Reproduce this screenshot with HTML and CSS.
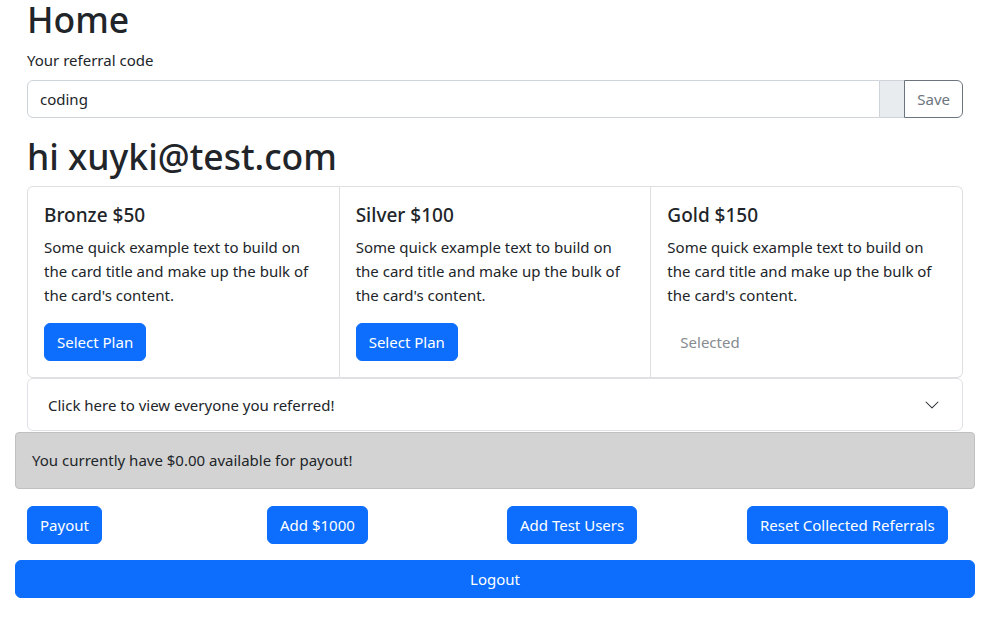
FILE: index.html
```html
<!DOCTYPE html>
<html lang="en">
<head>
<meta charset="utf-8">
<title>Home</title>
<link rel="stylesheet" href="styles.css">
</head>
<body>
<div class="page">
  <div class="inner">
    <h1 class="title first">Home</h1>
    <label class="label" for="code">Your referral code</label>
    <div class="input-group">
      <input id="code" class="input" type="text" value="coding">
      <span class="addon"></span>
      <button class="btn-outline">Save</button>
    </div>
    <h1 class="title">hi xuyki@test.com</h1>
    <div class="card-group">
      <div class="card">
        <h5 class="card-title">Bronze $50</h5>
        <p class="card-text">Some quick example text to build on the card title and make up the bulk of the card's content.</p>
        <button class="btn">Select Plan</button>
      </div>
      <div class="card">
        <h5 class="card-title">Silver $100</h5>
        <p class="card-text">Some quick example text to build on the card title and make up the bulk of the card's content.</p>
        <button class="btn">Select Plan</button>
      </div>
      <div class="card">
        <h5 class="card-title">Gold $150</h5>
        <p class="card-text">Some quick example text to build on the card title and make up the bulk of the card's content.</p>
        <button class="btn-selected" disabled>Selected</button>
      </div>
    </div>
    <div class="accordion">
      <span>Click here to view everyone you referred!</span>
      <svg class="chev" width="16" height="16" viewBox="0 0 16 16"><path fill="#212529" fill-rule="evenodd" d="M1.646 4.646a.5.5 0 0 1 .708 0L8 10.293l5.646-5.647a.5.5 0 0 1 .708.708l-6 6a.5.5 0 0 1-.708 0l-6-6a.5.5 0 0 1 0-.708z"/></svg>
    </div>
  </div>
  <div class="alert">You currently have $0.00 available for payout!</div>
  <div class="row">
    <div class="col"><button class="btn">Payout</button></div>
    <div class="col"><button class="btn">Add $1000</button></div>
    <div class="col"><button class="btn">Add Test Users</button></div>
    <div class="col"><button class="btn">Reset Collected Referrals</button></div>
  </div>
  <button class="btn btn-block">Logout</button>
</div>
</body>
</html>
```
FILE: styles.css
```css
* { box-sizing: border-box; }
html, body { margin: 0; padding: 0; background: #fff; }
body {
  font-family: "Noto Sans", "Open Sans", sans-serif;
  font-size: 15px;
  line-height: 24px;
  color: #212529;
}
.page { padding: 0 15px; }
.inner { padding: 0 12px; }
.title {
  font-size: 35.5px;
  font-weight: 500;
  line-height: 44px;
  margin: 0 0 8px;
}
.title.first { line-height: 38px; margin: 0 0 10px; }
.label { display: block; margin-bottom: 8px; }
.input-group { display: flex; height: 38px; margin-bottom: 16px; }
.input {
  flex: 1;
  min-width: 0;
  font: inherit;
  color: #212529;
  padding: 6px 12px;
  border: 1px solid #ced4da;
  border-radius: 6px 0 0 6px;
  background: #fff;
  outline: none;
}
.addon {
  width: 25px;
  background: #e9ecef;
  border: 1px solid #ced4da;
  border-left: 0;
}
.btn-outline {
  font: inherit;
  color: #6c757d;
  background: #fff;
  border: 1px solid #6c757d;
  border-radius: 0 6px 6px 0;
  padding: 6px 12px;
  margin-left: -1px;
}
.card-group { display: flex; }
.card {
  flex: 1;
  padding: 16px;
  border: 1px solid #dfdfdf;
  border-left: 0;
}
.card:first-child { border-left: 1px solid #dfdfdf; border-radius: 6px 0 0 6px; }
.card:last-child { border-radius: 0 6px 6px 0; }
.card-title { font-size: 19px; font-weight: 500; line-height: 24px; margin: 0 0 8px; }
.card-text { margin: 0 0 16px; }
.btn {
  font: inherit;
  color: #fff;
  background: #0d6efd;
  border: 1px solid #0d6efd;
  border-radius: 6px;
  padding: 6px 12px;
  line-height: 24px;
}
.btn-selected {
  font: inherit;
  color: #868b90;
  background: transparent;
  border: 1px solid transparent;
  padding: 6px 12px;
  line-height: 24px;
}
.accordion {
  display: flex;
  align-items: center;
  justify-content: space-between;
  padding: 14px 20px 13px;
  border: 1px solid #dee2e6;
  border-radius: 6px;
}
.chev { flex: none; margin-right: 2px; }
.alert {
  background: #d3d3d3;
  border: 1px solid #c0c0c0;
  border-radius: 4px;
  padding: 15px 16px 16px;
  margin: 1px 0 17px;
}
.row { display: flex; margin-bottom: 16px; }
.col { flex: 1; padding: 0 12px; }
.btn-block { display: block; width: 100%; }
```
